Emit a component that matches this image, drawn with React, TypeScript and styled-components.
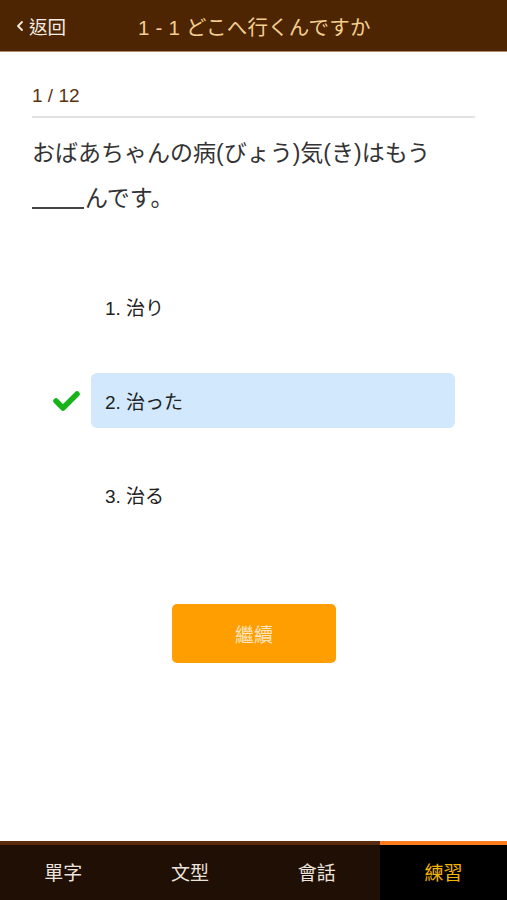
import React from "react";
import styled, { createGlobalStyle } from "styled-components";

const Global = createGlobalStyle`
  html, body { margin: 0; padding: 0; background: #fff; }
  body { font-family: "Liberation Sans", "Noto Sans CJK JP", sans-serif; }
  * { box-sizing: border-box; }
`;

const Page = styled.div`
  display: flex;
  flex-direction: column;
  width: 507px;
  height: 900px;
  overflow: hidden;
`;

const Header = styled.header`
  height: 52px;
  flex: none;
  background: #4e2502;
  border-bottom: 1px solid #b08a68;
  display: flex;
  align-items: center;
`;

const Back = styled.div`
  display: flex;
  align-items: center;
  gap: 5px;
  padding-left: 16px;
  width: 138px;
  color: #f4ece2;
  font-size: 18.5px;
  font-family: "Liberation Sans", "Noto Sans CJK TC", sans-serif;
`;

const Title = styled.div`
  color: #f2cf8e;
  font-size: 20.5px;
  letter-spacing: 0.2px;
`;

const Main = styled.main`
  flex: 1;
  padding: 0 32px;
  display: flex;
  flex-direction: column;
`;

const Counter = styled.div`
  color: #5a3210;
  font-size: 19px;
  padding-top: 33px;
  line-height: 22px;
  padding-bottom: 9px;
  border-bottom: 2px solid #e2e2e2;
`;

const Question = styled.p`
  margin: 13px 0 0;
  color: #333;
  font-size: 23px;
  line-height: 45px;
`;

const Blank = styled.span`
  display: inline-block;
  width: 52px;
  border-bottom: 2px solid #444;
  vertical-align: -3px;
  height: 18px;
  margin-right: 1px;
`;

const Options = styled.div`
  margin-top: 58px;
  display: flex;
  flex-direction: column;
  gap: 39px;
`;

const OptionRow = styled.div`
  display: flex;
  align-items: center;
`;

const CheckSlot = styled.div`
  width: 59px;
  flex: none;
  display: flex;
  justify-content: flex-end;
  padding-right: 11px;
`;

const OptionBox = styled.div<{ $selected?: boolean }>`
  width: 364px;
  height: 55px;
  border-radius: 6px;
  background: ${(p) => (p.$selected ? "#d1e8fd" : "transparent")};
  display: flex;
  align-items: center;
  padding-left: 14px;
  color: #222;
  font-size: 19px;
`;

const ButtonWrap = styled.div`
  margin-top: 82px;
  display: flex;
  justify-content: center;
  padding-left: 1px;
`;

const ContinueButton = styled.button`
  width: 164px;
  height: 59px;
  border: none;
  border-radius: 5px;
  background: #ff9e00;
  color: #ffe6c4;
  font-size: 19px;
  font-family: "Liberation Sans", "Noto Sans CJK TC", sans-serif;
`;

const TabBar = styled.nav`
  height: 59px;
  flex: none;
  display: grid;
  grid-template-columns: repeat(4, 1fr);
  background: #1f0f04;
`;

const Tab = styled.div<{ $active?: boolean }>`
  display: flex;
  align-items: center;
  justify-content: center;
  border-top: 4px solid ${(p) => (p.$active ? "#ff7d1e" : "#5a2a0c")};
  background: ${(p) => (p.$active ? "#000" : "transparent")};
  color: ${(p) => (p.$active ? "#f2b400" : "#ece4dc")};
  font-size: 19px;
  font-family: "Liberation Sans", "Noto Sans CJK TC", sans-serif;
  padding-bottom: 2px;
`;

const Check = () => (
  <svg width="27" height="22" viewBox="0 0 27 22">
    <polyline
      points="3,11 10,18 24,4"
      fill="none"
      stroke="#16b31a"
      strokeWidth="5.5"
      strokeLinecap="round"
      strokeLinejoin="round"
    />
  </svg>
);

const Chevron = () => (
  <svg width="8" height="12" viewBox="0 0 8 12">
    <polyline points="6,2 2,6 6,10" fill="none" stroke="#f4ece2" strokeWidth="1.8" strokeLinecap="round" strokeLinejoin="round" />
  </svg>
);

const options = [
  { label: "1. 治り", selected: false },
  { label: "2. 治った", selected: true },
  { label: "3. 治る", selected: false },
];

const tabs = ["單字", "文型", "會話", "練習"];

export default function App() {
  return (
    <Page>
      <Global />
      <Header>
        <Back>
          <Chevron />
          <span>返回</span>
        </Back>
        <Title>1 - 1 どこへ行くんですか</Title>
      </Header>
      <Main>
        <Counter>1 / 12</Counter>
        <Question>
          おばあちゃんの病(びょう)気(き)はもう
          <br />
          <Blank />んです。
        </Question>
        <Options>
          {options.map((o) => (
            <OptionRow key={o.label}>
              <CheckSlot>{o.selected && <Check />}</CheckSlot>
              <OptionBox $selected={o.selected}>{o.label}</OptionBox>
            </OptionRow>
          ))}
        </Options>
        <ButtonWrap>
          <ContinueButton>繼續</ContinueButton>
        </ButtonWrap>
      </Main>
      <TabBar>
        {tabs.map((t, i) => (
          <Tab key={t} $active={i === 3}>
            {t}
          </Tab>
        ))}
      </TabBar>
    </Page>
  );
}
